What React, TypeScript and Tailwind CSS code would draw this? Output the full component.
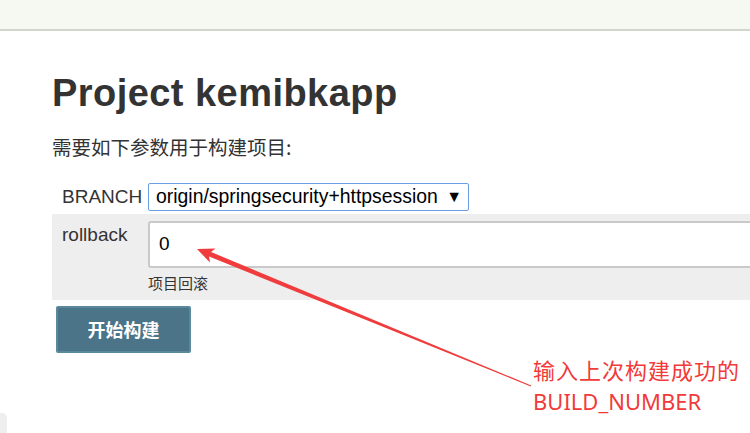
export default function App() {
  return (
    <div className="relative h-[433px] w-[750px] overflow-hidden bg-white font-['Liberation_Sans','Noto_Sans_CJK_SC',sans-serif] text-[#333]">
      <header className="h-[31px] border-b-2 border-[#d3d6cc] bg-[#f6f8f2]" />

      <main className="pl-[52px] pt-[39px]">
        <h1 className="text-[38px] font-bold leading-[46px] tracking-[0.45px] text-[#333]">Project kemibkapp</h1>
        <p className="mt-[19px] font-['Noto_Sans_CJK_SC',sans-serif] text-[19.5px] leading-[24px]">需要如下参数用于构建项目:</p>

        <div className="mt-[24px]">
          <div className="flex items-center pb-[3px]">
            <div className="w-[96px] shrink-0 pl-[10px] text-[19px] leading-[22px]">BRANCH</div>
            <div className="flex h-[28px] w-[321px] shrink-0 items-center justify-between rounded-[2px] border-[1.5px] border-[#6a9fe6] pl-[7px] pr-[6px] text-[19.4px] text-black">
              <span>origin/springsecurity+httpsession</span>
              <span className="text-[16px]">▼</span>
            </div>
          </div>

          <div className="flex h-[86px] bg-[#eeeeee] pt-[7px]">
            <div className="w-[96px] shrink-0 pl-[10px] pt-[3px] text-[19px] leading-[22px]">rollback</div>
            <div className="shrink-0">
              <div className="flex h-[47px] w-[640px] items-center rounded-[3px] border-2 border-[#c9c9c9] bg-white pl-[9px] text-[19px] text-black">0</div>
              <div className="mt-[5px] font-['Noto_Sans_CJK_SC',sans-serif] text-[15px] leading-[20px] text-[#333]">项目回滚</div>
            </div>
          </div>

          <button className="ml-[4px] mt-[6px] flex h-[47px] w-[135px] items-center justify-center rounded-[2px] border-2 border-[#5a889d] bg-[#4b7489] font-['Noto_Sans_CJK_SC',sans-serif] text-[18px] font-bold text-white">
            开始构建
          </button>
        </div>
      </main>

      <div className="absolute left-[533px] top-[355px] font-['Noto_Sans','Noto_Sans_CJK_SC',sans-serif] text-[22px] leading-[31px] text-[#f23a3a]">
        <div className="tracking-[1px]">输入上次构建成功的</div>
        <div>BUILD_NUMBER</div>
      </div>

      <svg className="pointer-events-none absolute left-0 top-0" width="750" height="433" viewBox="0 0 750 433">
        <polygon
          points="197,249 215.5,248.6 211,252 531.2,385.5 530.8,386.5 209.1,256.6 209.9,262.4"
          fill="#f03c3c"
        />
      </svg>

      <div className="absolute bottom-0 left-0 h-[20px] w-[7px] rounded-tr-[5px] bg-[#eeeeee]" />
    </div>
  );
}
